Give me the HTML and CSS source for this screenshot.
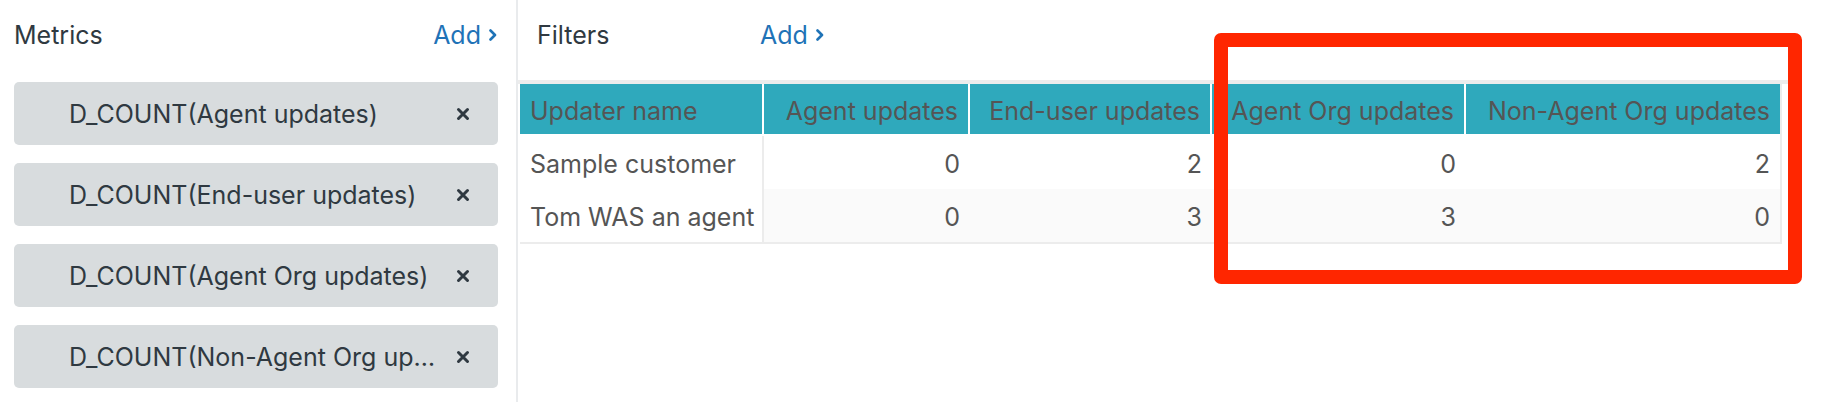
FILE: index.html
```html
<!DOCTYPE html>
<html lang="en">
<head>
<meta charset="utf-8">
<title>Report builder</title>
<link rel="stylesheet" href="styles.css">
</head>
<body>
<div class="page">
  <aside class="sidebar">
    <div class="panel-head">
      <span class="label">Metrics</span>
      <a class="add" href="#">Add <svg class="chev" viewBox="0 0 8 12" width="8" height="12"><path d="M1.5 1.5L6 6L1.5 10.5"/></svg></a>
    </div>
    <ul class="metrics">
      <li class="metric"><span class="metric-name">D_COUNT(Agent updates)</span><svg class="x" viewBox="0 0 14 14" width="14" height="14"><path d="M2.5 2.5L11.5 11.5M11.5 2.5L2.5 11.5"/></svg></li>
      <li class="metric"><span class="metric-name">D_COUNT(End-user updates)</span><svg class="x" viewBox="0 0 14 14" width="14" height="14"><path d="M2.5 2.5L11.5 11.5M11.5 2.5L2.5 11.5"/></svg></li>
      <li class="metric"><span class="metric-name">D_COUNT(Agent Org updates)</span><svg class="x" viewBox="0 0 14 14" width="14" height="14"><path d="M2.5 2.5L11.5 11.5M11.5 2.5L2.5 11.5"/></svg></li>
      <li class="metric"><span class="metric-name">D_COUNT(Non-Agent Org updates)</span><svg class="x" viewBox="0 0 14 14" width="14" height="14"><path d="M2.5 2.5L11.5 11.5M11.5 2.5L2.5 11.5"/></svg></li>
    </ul>
  </aside>
  <main class="main">
    <div class="filters-head">
      <span class="label filters-label">Filters</span>
      <a class="add" href="#">Add <svg class="chev" viewBox="0 0 8 12" width="8" height="12"><path d="M1.5 1.5L6 6L1.5 10.5"/></svg></a>
    </div>
    <div class="table-wrap">
      <table class="result">
        <colgroup>
          <col class="c1"><col class="c2"><col class="c3"><col class="c4"><col class="c5">
        </colgroup>
        <thead>
          <tr>
            <th class="left">Updater name</th>
            <th>Agent updates</th>
            <th>End-user updates</th>
            <th>Agent Org updates</th>
            <th class="last">Non-Agent Org updates</th>
          </tr>
        </thead>
        <tbody>
          <tr>
            <td class="rowhead">Sample customer</td>
            <td>0</td><td>2</td><td>0</td><td>2</td>
          </tr>
          <tr class="alt">
            <td class="rowhead">Tom WAS an agent</td>
            <td>0</td><td>3</td><td>3</td><td>0</td>
          </tr>
        </tbody>
      </table>
    </div>
  </main>
  <div class="highlight"></div>
</div>
</body>
</html>
```

FILE: styles.css
```css
* { box-sizing: border-box; }
html, body { margin: 0; padding: 0; background: #fff; }
body {
  font-family: "Inter", "Noto Sans", "Liberation Sans", sans-serif;
  color: #2f3941;
}
.page {
  position: relative;
  display: flex;
  width: 1844px;
  height: 402px;
  overflow: hidden;
}
.sidebar {
  width: 518px;
  flex: none;
  padding: 0 19px 0 14px;
  border-right: 2px solid #e9ebed;
}
.panel-head {
  height: 70px;
  display: flex;
  align-items: center;
  justify-content: space-between;
}
.label {
  font-size: 25px;
  color: #2f3941;
}
.add {
  display: flex;
  align-items: center;
  gap: 8px;
  font-size: 25px;
  color: #1f73b7;
  text-decoration: none;
}
.chev { fill: none; stroke: #1f73b7; stroke-width: 2.6; stroke-linecap: round; stroke-linejoin: round; }
.metrics {
  list-style: none;
  margin: 12px 0 0;
  padding: 0;
  display: flex;
  flex-direction: column;
  gap: 18px;
}
.metric {
  height: 63px;
  width: 484px;
  background: #d8dcde;
  border-radius: 5px;
  display: flex;
  align-items: center;
  padding: 0 28px 0 55px;
  font-size: 25px;
  color: #2f3941;
}
.metric-name {
  flex: 1;
  min-width: 0;
  white-space: nowrap;
  overflow: hidden;
  text-overflow: ellipsis;
  margin-right: 19px;
}
.x { flex: none; fill: none; stroke: #2f3941; stroke-width: 3; stroke-linecap: round; }
.main {
  flex: 1;
  min-width: 0;
}
.filters-head {
  height: 80px;
  display: flex;
  align-items: center;
  padding: 0 0 10px 19px;
}
.filters-label { width: 223px; }
.table-wrap {
  width: 1277px;
  border-top: 4px solid #ececec;
}
.result {
  margin-left: 2px;
  width: 1262px;
  table-layout: fixed;
  border-collapse: separate;
  border-spacing: 0;
  border-right: 2px solid #ececec;
  border-bottom: 2px solid #ececec;
  font-size: 25px;
  color: #555;
}
.c1 { width: 244px; }
.c2 { width: 206px; }
.c3 { width: 242px; }
.c4 { width: 254px; }
.c5 { width: 314px; }
.result th {
  height: 52px;
  background: #2fa9bc;
  font-weight: 400;
  text-align: right;
  padding: 4px 10px 0 10px;
  border-right: 2px solid #fff;
  border-bottom: 2px solid #fff;
  white-space: nowrap;
}
.result th.left { text-align: left; }
.result th.last { border-right: 0; }
.result td {
  height: 53px;
  padding: 2px 10px 0;
  text-align: right;
  background: #fff;
  white-space: nowrap;
}
.result tr.alt td { background: #fafafa; }
.result td.rowhead,
.result tr.alt td.rowhead {
  text-align: left;
  background: #fff;
  border-right: 2px solid #ececec;
}
.highlight {
  position: absolute;
  left: 1214px;
  top: 33px;
  width: 588px;
  height: 251px;
  border: 14px solid #ff2600;
  border-radius: 7px;
  pointer-events: none;
}
```
